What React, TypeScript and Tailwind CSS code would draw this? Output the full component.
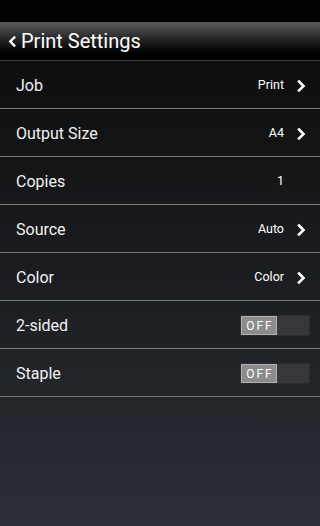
import React from "react";

type Row = {
  label: string;
  value?: string;
  arrow?: boolean;
  toggle?: boolean;
};

const rows: Row[] = [
  { label: "Job", value: "Print", arrow: true },
  { label: "Output Size", value: "A4", arrow: true },
  { label: "Copies", value: "1" },
  { label: "Source", value: "Auto", arrow: true },
  { label: "Color", value: "Color", arrow: true },
  { label: "2-sided", toggle: true },
  { label: "Staple", toggle: true },
];

const Chevron = ({ className }: { className?: string }) => (
  <svg viewBox="0 0 10 14" className={className} fill="none" stroke="currentColor" strokeWidth="2.6" strokeLinecap="square">
    <path d="M3 2.5 L7.5 7 L3 11.5" />
  </svg>
);

const Toggle = () => (
  <div className="flex h-[21px] w-[70px] -mr-[4px] bg-[#35373b] border border-[#2a2b2e]">
    <div className="flex w-[36px] items-center justify-center bg-[#8c8c8c] border border-[#b0b0b0] text-[12px] tracking-[2px] pl-[2px] text-white leading-none">
      OFF
    </div>
  </div>
);

export default function App() {
  return (
    <div
      className="w-[320px] h-[526px] flex flex-col bg-gradient-to-b from-[#0a0a0a] via-[#1a1c1f] to-[#2b2f36] text-white overflow-hidden"
      style={{ fontFamily: "Roboto, 'Noto Sans', sans-serif" }}
    >
      {/* status bar */}
      <div className="h-[22px] bg-black shrink-0" />

      {/* title bar */}
      <div className="h-[38px] shrink-0 bg-gradient-to-b from-[#5e5e5e] via-[#1a1a1a] via-55% to-black flex items-center pl-[8px] gap-[4px]">
        <Chevron className="w-[9px] h-[15px] text-white rotate-180" />
        <span className="text-[20px] leading-none text-white">Print Settings</span>
      </div>

      <div className="h-[1px] bg-[#3a3a3a] shrink-0" />

      {rows.map((r) => (
        <div key={r.label} className="shrink-0">
          <div className="h-[47px] flex items-center pl-[16px] pr-[14px] pt-[2px]">
            <span className="flex-1 text-[16px] text-[#f2f2f2]">{r.label}</span>
            {r.value && (
              <span className={`text-[12.5px] text-white ${r.arrow ? "" : "mr-[22px]"}`}>{r.value}</span>
            )}
            {r.arrow && <Chevron className="w-[10px] h-[14px] ml-[12px] text-white" />}
            {r.toggle && <Toggle />}
          </div>
          <div className="h-[1px] bg-[#7a7a7a]" />
        </div>
      ))}
    </div>
  );
}
